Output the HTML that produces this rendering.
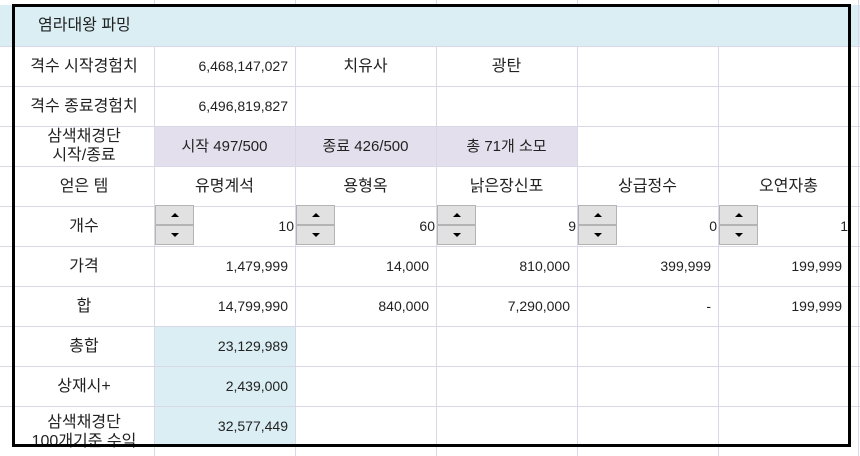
<!DOCTYPE html><html><head><meta charset="utf-8"><style>
*{margin:0;padding:0;box-sizing:border-box}
body{width:860px;height:456px;overflow:hidden;background:#fff;position:relative;font-family:"Liberation Sans","Noto Sans CJK KR",sans-serif;font-size:14px;color:#222}
.h{position:absolute;left:0;width:860px;height:1px;background:#d8d8e6}
.v{position:absolute;top:0;height:456px;width:1px;background:#d8d8e6}
.bg{position:absolute}
.c{position:absolute;height:40px;display:flex;align-items:center;justify-content:center;text-align:center;line-height:19px}
.k{font-size:16px}
.m{font-size:15px}
.r{justify-content:flex-end;padding-right:7px}
.sp{position:absolute;width:39px;height:40px}
.sp div{height:20px;background:#e1e1e1;border:1px solid #b4b4b4;position:relative}
.sp div:after{content:"";position:absolute;left:15px;top:7px;border-left:4px solid transparent;border-right:4px solid transparent}
.u:after{border-bottom:4px solid #000}
.d:after{border-top:4px solid #000}
.box{position:absolute;left:12px;top:4px;width:839px;height:443px;border:3px solid #000}
</style></head><body>
<div class="bg" style="left:0;top:5px;width:860px;height:41px;background:#daeef3"></div>
<div class="bg" style="left:154px;top:126px;width:423px;height:40px;background:#e4dfec"></div>
<div class="bg" style="left:154px;top:326px;width:141px;height:120px;background:#daeef3"></div>
<div class="h" style="top:46px"></div><div class="h" style="top:86px"></div><div class="h" style="top:126px"></div><div class="h" style="top:166px"></div><div class="h" style="top:206px"></div><div class="h" style="top:246px"></div><div class="h" style="top:286px"></div><div class="h" style="top:326px"></div><div class="h" style="top:366px"></div><div class="h" style="top:406px"></div>
<div class="v" style="left:154px"></div><div class="v" style="left:295px"></div><div class="v" style="left:436px"></div><div class="v" style="left:577px"></div><div class="v" style="left:718px"></div><div class="v" style="left:858px"></div>
<div class="bg" style="left:15px;top:7px;width:833px;height:39px;background:#daeef3"></div>

<div class="c k" style="left:38px;top:5px;height:41px">염라대왕 파밍</div>

<div class="c k" style="left:14px;top:46px;width:140px">격수 시작경험치</div>
<div class="c r" style="left:154px;top:46px;width:141px">6,468,147,027</div>
<div class="c k" style="left:295px;top:46px;width:141px">치유사</div>
<div class="c k" style="left:436px;top:46px;width:141px">광탄</div>

<div class="c k" style="left:14px;top:86px;width:140px">격수 종료경험치</div>
<div class="c r" style="left:154px;top:86px;width:141px">6,496,819,827</div>

<div class="c k" style="left:14px;top:126px;width:140px">삼색채경단<br>시작/종료</div>
<div class="c m" style="left:154px;top:126px;width:141px">시작 497/500</div>
<div class="c m" style="left:295px;top:126px;width:141px">종료 426/500</div>
<div class="c m" style="left:436px;top:126px;width:141px">총 71개 소모</div>

<div class="c k" style="left:14px;top:166px;width:140px">얻은 템</div>
<div class="c k" style="left:154px;top:166px;width:141px">유명계석</div>
<div class="c k" style="left:295px;top:166px;width:141px">용형옥</div>
<div class="c k" style="left:436px;top:166px;width:141px">낡은장신포</div>
<div class="c k" style="left:577px;top:166px;width:141px">상급정수</div>
<div class="c k" style="left:718px;top:166px;width:141px">오연자총</div>

<div class="c k" style="left:14px;top:206px;width:140px">개수</div>
<div class="sp" style="left:155px;top:205px"><div class="u"></div><div class="d"></div></div>
<div class="sp" style="left:296px;top:205px"><div class="u"></div><div class="d"></div></div>
<div class="sp" style="left:437px;top:205px"><div class="u"></div><div class="d"></div></div>
<div class="sp" style="left:578px;top:205px"><div class="u"></div><div class="d"></div></div>
<div class="sp" style="left:719px;top:205px"><div class="u"></div><div class="d"></div></div>
<div class="c r" style="left:154px;top:206px;width:141px;padding-right:1px">10</div>
<div class="c r" style="left:295px;top:206px;width:141px;padding-right:1px">60</div>
<div class="c r" style="left:436px;top:206px;width:141px;padding-right:1px">9</div>
<div class="c r" style="left:577px;top:206px;width:141px;padding-right:1px">0</div>
<div class="c r" style="left:718px;top:206px;width:131px;padding-right:1px">1</div>

<div class="c k" style="left:14px;top:246px;width:140px">가격</div>
<div class="c r" style="left:154px;top:246px;width:141px">1,479,999</div>
<div class="c r" style="left:295px;top:246px;width:141px">14,000</div>
<div class="c r" style="left:436px;top:246px;width:141px">810,000</div>
<div class="c r" style="left:577px;top:246px;width:141px">399,999</div>
<div class="c r" style="left:718px;top:246px;width:131px">199,999</div>

<div class="c k" style="left:14px;top:286px;width:140px">합</div>
<div class="c r" style="left:154px;top:286px;width:141px">14,799,990</div>
<div class="c r" style="left:295px;top:286px;width:141px">840,000</div>
<div class="c r" style="left:436px;top:286px;width:141px">7,290,000</div>
<div class="c r" style="left:577px;top:286px;width:141px">-</div>
<div class="c r" style="left:718px;top:286px;width:131px">199,999</div>

<div class="c k" style="left:14px;top:326px;width:140px">총합</div>
<div class="c r" style="left:154px;top:326px;width:141px">23,129,989</div>
<div class="c k" style="left:14px;top:366px;width:140px">상재시+</div>
<div class="c r" style="left:154px;top:366px;width:141px">2,439,000</div>
<div class="c k" style="left:14px;top:406px;width:140px;height:44px;padding-top:8px">삼색채경단<br>100개기준 수익</div>
<div class="c r" style="left:154px;top:406px;width:141px">32,577,449</div>

<div class="box"></div>
</body></html>
